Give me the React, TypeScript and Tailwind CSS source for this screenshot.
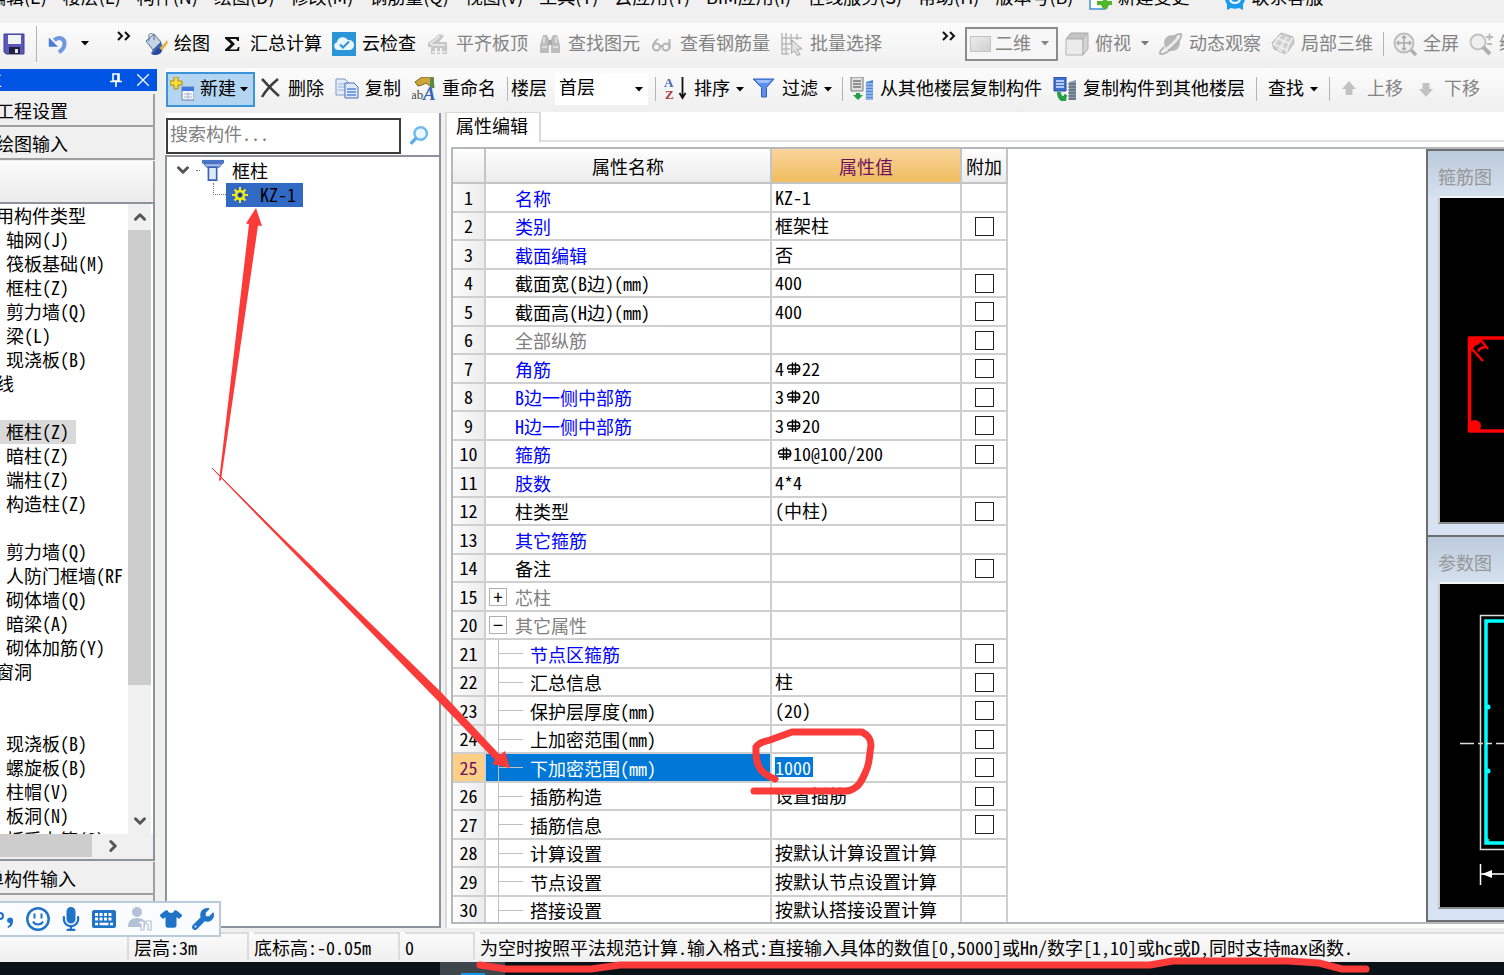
import React from "react";
import { FaMicrophone, FaShirt, FaWrench } from "react-icons/fa6";
import { ChevronDown, ChevronRight, ChevronUp } from "lucide-react";

const UI = "font-['Noto_Sans_CJK_SC',sans-serif]";
const MONO = "font-['Noto_Sans_Mono_CJK_SC','Noto_Sans_CJK_SC',monospace]";

/* ---------- icons ---------- */

function Icon({ children, className = "h-6 w-6" }: { children: React.ReactNode; className?: string }) {
  return (
    <svg viewBox="0 0 24 24" className={`shrink-0 ${className}`} fill="none" aria-hidden="true">
      {children}
    </svg>
  );
}

const Caret = ({ className = "" }: { className?: string }) => (
  <svg viewBox="0 0 8 5" className={`h-[5px] w-2 shrink-0 ${className}`} aria-hidden="true">
    <path d="M0 0h8L4 4.6z" fill="currentColor" />
  </svg>
);

const More = () => (
  <svg viewBox="0 0 14 10" className="h-[10px] w-[14px] shrink-0" fill="none" stroke="#111" strokeWidth="2" aria-hidden="true">
    <path d="M1 1l4 4-4 4M8 1l4 4-4 4" />
  </svg>
);

const SaveIcon = () => (
  <Icon>
    <path d="M2 2h20v20H4l-2-2z" fill="#5a58bc" stroke="#3f3c96" />
    <path d="M6 3h13v9H6z" fill="#f1f3fb" />
    <path d="M7 15h11v7H7z" fill="#20223c" />
    <path d="M13 17h3v4h-3z" fill="#e8e8f2" />
  </Icon>
);
const UndoIcon = () => (
  <Icon className="h-[22px] w-[22px]">
    <path d="M8 8c5-5 12-2 11 5-.4 4-3 6-6 8" stroke="#6f96de" strokeWidth="4.500" />
    <path d="M2 5v10h10z" fill="#4b7bd4" />
  </Icon>
);
const PaintIcon = () => (
  <Icon>
    <path d="M2 9l8-7 7 8-8 8z" fill="#c4d3e6" stroke="#5a6f8e" />
    <path d="M5 9V3c0-2 5-2 5 1v4" stroke="#5a6f8e" />
    <path d="M9 18l8-8 2 5-5 7c-3 2-6 1-7-1z" fill="#3f66b5" />
    <path d="M23 8l-8 9 3 2 6-8z" fill="#e9b44c" />
    <path d="M15 16c-4 1-4 5-7 6 5 2 10 0 10-4z" fill="#274a9c" />
  </Icon>
);
const SigmaIcon = () => (
  <Icon>
    <path d="M5 5h14v4h-1.600c-.4-1.500-1-2-3-2H10l5 5-5.500 5.500H15c2 0 2.600-.6 3-2.500H19.500L19 19H5v-1.500l6-5.500-6-5.500z" fill="#111" />
  </Icon>
);
const CloudIcon = () => (
  <Icon>
    <path d="M0 0h24v24H0z" fill="#2b95d8" />
    <path d="M6 18a4 4 0 0 1-1-7.800A6 6 0 0 1 16 8a5 5 0 0 1 2 10z" fill="#eaf6fd" />
    <path d="M8 12.500l3 3 6-6" stroke="#2b95d8" strokeWidth="2" />
  </Icon>
);
const SlabIcon = () => (
  <Icon>
    <path d="M2 11L14 2l4 2-5 6h8v12h-5v-6h-2v6h-3v-6H9v6H5v-7H2z" fill="#c6c6c6" />
    <path d="M4 12l10-8M5 13h14M6 20h14" stroke="#efefef" strokeWidth="1.500" />
  </Icon>
);
const BinocularIcon = () => (
  <Icon>
    <path d="M5 3h4l2 4v14H2v-8zM19 3h-4l-2 4v14h9v-8z" fill="#bdbdbd" />
    <path d="M10 8h4v5h-4z" fill="#a8a8a8" />
    <path d="M4 15h5M15 15h5M6 5v6M18 5v6" stroke="#e6e6e6" strokeWidth="1.500" />
  </Icon>
);
const GlassesIcon = () => (
  <Icon>
    <g stroke="#b4b4b4" strokeWidth="2">
      <circle cx="6.500" cy="15" r="3.500" />
      <circle cx="16" cy="15" r="3.500" />
      <path d="M3 15c0-4 2-6 5-8M10 14h2.500M19.500 17V7" />
    </g>
  </Icon>
);
const BatchIcon = () => (
  <Icon>
    <path d="M2 1v21h7M6 1v21M2 6h20M2 12h10M2 17h8M11 2v9M17 2v6" stroke="#b9b9b9" strokeWidth="1.500" />
    <path d="M12 8l10 9-5 .5 3 5-3 1-2.500-5-3 3z" fill="#e2e2e2" stroke="#a9a9a9" />
  </Icon>
);
const CubeIcon = () => (
  <Icon>
    <path d="M1 7l5-6h17l-5 6z" fill="#c4c4c4" stroke="#a8a8a8" />
    <path d="M1 7h17v16H1z" fill="#ebebeb" stroke="#b5b5b5" />
    <path d="M18 7l5-6v16l-5 6z" fill="#d4d4d4" stroke="#b0b0b0" />
  </Icon>
);
const PlanetIcon = () => (
  <Icon>
    <circle cx="13" cy="11" r="8" fill="#b8b8b8" />
    <path d="M5 18C10 16 18 9 21 3" stroke="#ececec" strokeWidth="3" />
    <path d="M1 22c4 1 11-4 15-9 5-5 7-9 6-11-2-1-5 1-8 3M1 22c-1-2 2-5 4-7" stroke="#b2b2b2" strokeWidth="1.800" />
  </Icon>
);
const LocalIcon = () => (
  <Icon>
    <path d="M1 11L10 1l12 4 1 6-8 11-12-5z" fill="#cfcfcf" stroke="#b2b2b2" />
    <path d="M5 6l13 5 4-5M18 11l-3 11M10 3L2 13M16 5l-9 14M2 12l14 6M12 9l-2 11" stroke="#efefef" strokeWidth="1.500" />
  </Icon>
);
const FullIcon = () => (
  <Icon>
    <circle cx="11" cy="11" r="9.500" fill="#efefef" stroke="#bdbdbd" strokeWidth="2" />
    <path d="M11 4v14M4 11h14M9 6l2-2 2 2M9 16l2 2 2-2M6 9l-2 2 2 2M16 9l2 2-2 2" stroke="#a9a9a9" strokeWidth="1.500" />
    <path d="M18 18l5 5" stroke="#b0b0b0" strokeWidth="3.500" />
  </Icon>
);
const ZoomIcon = () => (
  <Icon>
    <circle cx="9" cy="10" r="7.500" fill="#efefef" stroke="#c2c2c2" strokeWidth="2" />
    <path d="M14 15l7 7" stroke="#b0b0b0" strokeWidth="4" />
    <path d="M17 5h7M20.500 1.500v7M18 12h5" stroke="#b8b8b8" strokeWidth="1.800" />
  </Icon>
);
const NewIcon = () => (
  <Icon>
    <path d="M12 10h12v13H12z" fill="#f4f7fd" stroke="#6d7fae" />
    <path d="M12 10h12v4H12z" fill="#3f78dc" />
    <path d="M14 17h8M14 20h8M18 15v7" stroke="#a9b4cc" />
    <path d="M4 0h4v4h4v4H8v4H4V8H0V4h4z" fill="#f7dc3c" stroke="#a88a14" />
  </Icon>
);
const DeleteIcon = () => (
  <Icon>
    <path d="M4 2c5 5 10 11 17 17M20 2C14 7 8 13 4 20" stroke="#3c3c3c" strokeWidth="2.500" />
  </Icon>
);
const CopyIcon = () => (
  <Icon>
    <path d="M1 2h9l4 4v12H1z" fill="#e4edfa" stroke="#7f97c4" />
    <path d="M3 7h7M3 10h7M3 13h7" stroke="#8fb0e4" />
    <path d="M10 6h9l4 4v11H10z" fill="#dfe9fa" stroke="#4c6cae" />
    <path d="M12 12h9M12 15h9M12 18h9" stroke="#5685d8" strokeWidth="1.500" />
  </Icon>
);
const RenameIcon = () => (
  <Icon>
    <path d="M3 5l7-5h11l1 11-4-2-4-3-4 2-4 1z" fill="#cda53a" stroke="#7d6620" />
    <path d="M18 1h4v9h-4z" fill="#558c4a" />
    <text x="-1" y="22" fontSize="13" fontFamily="Liberation Serif, serif" fill="#444">ab</text>
    <text x="11" y="23" fontSize="19" fontWeight="700" fontStyle="italic" fontFamily="Liberation Serif, serif" fill="#3465b8">A</text>
  </Icon>
);
const SortIcon = () => (
  <Icon>
    <text x="0" y="10" fontSize="13" fontWeight="700" fontFamily="Liberation Serif, serif" fill="#4467ae">A</text>
    <text x="1" y="22" fontSize="13" fontWeight="700" fontFamily="Liberation Serif, serif" fill="#a93c3c">Z</text>
    <path d="M18.500 0v20M15.500 16l3 5 3-5" stroke="#111" strokeWidth="1.800" />
  </Icon>
);
const FilterIcon = () => (
  <Icon>
    <path d="M1 2h21l-7.500 8.500V20h-5v-9.500z" fill="#5a8ff0" stroke="#3560b8" />
    <path d="M4 3h15l-3 3H7z" fill="#9dc0fa" />
  </Icon>
);
function FloorCopyIcon({ blue = false }: { blue?: boolean }) {
  return (
    <Icon>
      <path d="M1 0h12v14H1z" fill={blue ? "#3f6fd0" : "#e0e0e0"} stroke={blue ? "#274a9c" : "#777"} />
      <path d="M3 4h8M3 7h8M3 10h8" stroke={blue ? "#dfe9fa" : "#777"} strokeWidth="1.500" />
      {blue ? (
        <path d="M4 15h4c0 3 1 4 3 4v-2l3 1-1 6H8c-3-2-4-5-4-9z" fill="#21a045" />
      ) : (
        <path d="M6 16h4v2h3l-5 5-5-5h3z" fill="#21a045" />
      )}
      <path d="M16 5l7-2v20h-7z" fill={blue ? "#8d9bac" : "#4f86d8"} />
      <path d="M15 7h8M15 10h8M15 13h8M15 16h8M15 19h8M15 22h8" stroke={blue ? "#4b5a6c" : "#cfe0f8"} strokeWidth="1.200" />
    </Icon>
  );
}
function MoveIcon({ down = false }: { down?: boolean }) {
  return (
    <Icon className={down ? "h-6 w-6 rotate-180" : "h-6 w-6"}>
      <path d="M12 4l7 8h-3.500v6h-7v-6H5z" fill="#c2c2c2" />
    </Icon>
  );
}
const PillarIcon = () => (
  <Icon className="h-6 w-[22px]">
    <path d="M0 1h24v4H0z" fill="#4a74c4" />
    <path d="M2 5h20l-3 4H5z" fill="#9db9ec" stroke="#3b62b0" />
    <path d="M7 9h9v14H7z" fill="#dfe9fb" stroke="#3b62b0" strokeWidth="1.800" />
  </Icon>
);
const GearIcon = () => (
  <svg viewBox="0 0 16 16" className="h-4 w-4 shrink-0" fill="none" stroke="#f5ea14" aria-hidden="true">
    <circle cx="8" cy="8" r="4" strokeWidth="2.500" />
    <path d="M8 0v4M8 12v4M0 8h4M12 8h4M2.500 2.500l2.500 2.500M11 11l2.500 2.500M13.500 2.500L11 5M5 11l-2.500 2.500" strokeWidth="2" />
    <circle cx="8" cy="8" r="1.500" fill="#222" stroke="none" />
  </svg>
);
const Rebar = () => (
  <svg viewBox="0 0 18 18" className="mt-[2px] h-[18px] w-[18px] shrink-0" fill="none" stroke="#000" strokeWidth="1.400" aria-hidden="true">
    <path d="M8.500 2.500v12.500M11.500 2.500v12.500M6.500 5h7c3 1 3 6 0 7H4M6.500 5c-3 .5-3.500 3-2.500 4H15" />
  </svg>
);

/* ---------- top bars ---------- */

function MenuBar() {
  const left = ["编辑(E)", "楼层(L)", "构件(N)", "绘图(D)", "修改(M)", "钢筋量(Q)", "视图(V)", "工具(T)", "云应用(Y)", "BIM应用(I)", "在线服务(S)", "帮助(H)", "版本号(B)"];
  return (
    <nav className="flex h-[23px] shrink-0 overflow-hidden bg-[#f0f0f0]">
      <div className="-mt-4 -ml-3 flex h-6 items-center gap-4 text-[18px] leading-6 whitespace-nowrap">
        {left.map((t) => (
          <button key={t}>{t}</button>
        ))}
        <button className="flex items-center gap-1">
          <Icon className="mt-2 h-6 w-6">
            <path d="M1 0h15v21H1z" fill="#fff" stroke="#3d8fd8" strokeWidth="1.500" />
            <path d="M14 9h4v4h5v4h-3l-2 4h-4l-2-4H8v-4h6z" fill="#4fb82a" />
          </Icon>
          新建变更
        </button>
        <span className="-mx-2">·</span>
        <button className="flex items-center gap-1">
          <Icon className="mt-2 h-6 w-6">
            <path d="M2 10a10 10 0 0 1 20 0c0 3-1 5-2 6v6l-4-2c-3 1-5 1-8 0l-4 2v-6c-1-1-2-3-2-6z" fill="#1c9af0" />
            <path d="M7 12c2 4 8 4 10 0" stroke="#fff" strokeWidth="2" />
          </Icon>
          联系客服
        </button>
      </div>
    </nav>
  );
}

const Sep = ({ className = "" }: { className?: string }) => (
  <span className={`w-px shrink-0 bg-[#b4b4b4] ${className}`} />
);

function Tool({ icon, label, gray = false, caret = false }: { icon: React.ReactNode; label: string; gray?: boolean; caret?: boolean }) {
  return (
    <button className={`flex shrink-0 items-center gap-1.5 ${gray ? "text-[#838383]" : "text-black"}`}>
      {icon}
      <span className="pb-1">{label}</span>
      {caret && <Caret />}
    </button>
  );
}

function MainToolbar() {
  return (
    <div className="flex h-[45px] shrink-0 items-center overflow-hidden bg-linear-to-b from-[#fcfcfc] to-[#efefef] pb-1 text-[18px] leading-6 whitespace-nowrap">
      <div className="flex w-[134px] shrink-0 items-center pl-[2px]">
        <button aria-label="保存"><SaveIcon /></button>
        <Sep className="ml-[10px] h-9" />
        <button aria-label="撤销" className="ml-[10px] flex items-center gap-3">
          <UndoIcon />
          <Caret />
        </button>
        <span className="ml-[28px] -mt-4"><More /></span>
      </div>
      <div className="flex shrink-0 items-center gap-[10px] pl-[10px]">
        <Tool icon={<PaintIcon />} label="绘图" />
        <Tool icon={<SigmaIcon />} label="汇总计算" />
        <Tool icon={<CloudIcon />} label="云检查" />
        <Tool icon={<SlabIcon />} label="平齐板顶" gray />
        <Tool icon={<BinocularIcon />} label="查找图元" gray />
        <Tool icon={<GlassesIcon />} label="查看钢筋量" gray />
        <Tool icon={<BatchIcon />} label="批量选择" gray />
      </div>
      <span className="ml-[60px] -mt-4 shrink-0"><More /></span>
      <div className="ml-[9px] flex h-[34px] w-[93px] shrink-0 items-center border-2 border-[#8c8c8c] bg-[#f6f6f6] pl-[3px] text-[#838383]">
        <span className="h-4 w-[21px] border border-[#c4c4c4] bg-linear-to-br from-[#ececec] to-[#cfcfcf]" />
        <select aria-label="视图模式" className="ml-1 w-[42px] appearance-none bg-transparent pb-1">
          <option>二维</option>
        </select>
        <Caret className="ml-1" />
      </div>
      <div className="flex shrink-0 items-center gap-[10px] pl-[7px]">
        <Tool icon={<CubeIcon />} label="俯视" gray />
        <Caret className="text-[#777]" />
        <Tool icon={<PlanetIcon />} label="动态观察" gray />
        <Tool icon={<LocalIcon />} label="局部三维" gray />
        <Sep className="h-6" />
      </div>
      <div className="flex shrink-0 items-center gap-[10px] pl-[9px]">
        <Tool icon={<FullIcon />} label="全屏" gray />
        <Tool icon={<ZoomIcon />} label="缩放" gray />
      </div>
    </div>
  );
}

function ComponentToolbar() {
  return (
    <div className="flex h-[42px] shrink-0 items-center overflow-hidden bg-linear-to-b from-[#fcfcfc] to-[#efefef] text-[18px] leading-6 whitespace-nowrap">
      <button className="ml-[1px] flex h-[35px] w-[89px] shrink-0 items-center border-2 border-[#3a94dc] bg-[#b3d5f2] pl-[2px]">
        <NewIcon />
        <span className="ml-[6px] pb-1">新建</span>
        <Caret className="ml-1" />
      </button>
      <div className="flex items-center gap-[11px] pl-[3px]">
        <Tool icon={<DeleteIcon />} label="删除" />
        <Tool icon={<CopyIcon />} label="复制" />
        <Tool icon={<RenameIcon />} label="重命名" />
        <Sep className="h-6" />
      </div>
      <label className="ml-[3px] shrink-0 pb-1" htmlFor="floor">楼层</label>
      <div className="ml-2 flex h-8 w-[93px] shrink-0 items-center bg-white pl-[4px]">
        <select id="floor" className="w-[76px] appearance-none bg-transparent pb-1.5">
          <option>首层</option>
        </select>
        <Caret />
      </div>
      <div className="flex shrink-0 items-center gap-2 pl-[7px]">
        <Sep className="h-6" />
        <Tool icon={<SortIcon />} label="排序" caret />
      </div>
      <div className="flex shrink-0 items-center gap-[10px] pl-2">
        <Tool icon={<FilterIcon />} label="过滤" caret />
        <Sep className="h-6" />
      </div>
      <div className="flex shrink-0 items-center gap-[11px] pl-[7px]">
        <Tool icon={<FloorCopyIcon />} label="从其他楼层复制构件" />
        <Tool icon={<FloorCopyIcon blue />} label="复制构件到其他楼层" />
        <Sep className="h-6" />
        <button className="flex items-center gap-1.5">
          <span className="pb-1">查找</span>
          <Caret />
        </button>
        <Sep className="h-6" />
      </div>
      <div className="flex shrink-0 items-center gap-[11px] pl-[7px]">
        <Tool icon={<MoveIcon />} label="上移" gray />
        <Tool icon={<MoveIcon down />} label="下移" gray />
      </div>
    </div>
  );
}

/* ---------- left navigation ---------- */

type NavRow = { text: string; group?: boolean; selected?: boolean };
const navRows: NavRow[] = [
  { text: "常用构件类型", group: true },
  { text: "轴网(J)" },
  { text: "筏板基础(M)" },
  { text: "框柱(Z)" },
  { text: "剪力墙(Q)" },
  { text: "梁(L)" },
  { text: "现浇板(B)" },
  { text: "轴线", group: true },
  { text: "" },
  { text: "框柱(Z)", selected: true },
  { text: "暗柱(Z)" },
  { text: "端柱(Z)" },
  { text: "构造柱(Z)" },
  { text: "" },
  { text: "剪力墙(Q)" },
  { text: "人防门框墙(RF" },
  { text: "砌体墙(Q)" },
  { text: "暗梁(A)" },
  { text: "砌体加筋(Y)" },
  { text: "门窗洞", group: true },
  { text: "" },
  { text: "" },
  { text: "现浇板(B)" },
  { text: "螺旋板(B)" },
  { text: "柱帽(V)" },
  { text: "板洞(N)" },
  { text: "板受力筋(S)" },
];

function NavButton({ children }: { children: React.ReactNode }) {
  return (
    <button className="flex h-[33px] w-full shrink-0 items-center overflow-hidden border-r-2 border-b-2 border-[#a0a0a0] bg-[#f0f0f0] text-left leading-6 whitespace-nowrap">
      {children}
    </button>
  );
}

function Navigation() {
  return (
    <aside className={`flex w-[157px] shrink-0 flex-col overflow-hidden bg-[#f0f0f0] text-[18px] ${MONO}`}>
      <div className="mt-[1px] flex h-[22px] shrink-0 items-center bg-[#0054e3] text-white">
        <span className="-ml-4 pb-1 leading-[22px]">栏</span>
        <button aria-label="固定" className="ml-auto">
          <svg viewBox="0 0 12 14" className="h-[14px] w-3" fill="none" stroke="#fff" strokeWidth="1.600">
            <path d="M3 1h6v7H3zM0 8.500h12M6 8.500V14M8 1v7" />
          </svg>
        </button>
        <button aria-label="关闭" className="mr-2 ml-[15px]">
          <svg viewBox="0 0 12 12" className="h-3 w-3" fill="none" stroke="#fff" strokeWidth="1.300">
            <path d="M0 0l12 12M12 0L0 12" />
          </svg>
        </button>
      </div>
      <div className="flex min-h-0 flex-1 flex-col pt-[3px] pr-[2px]">
        <NavButton><span className="-ml-1">工程设置</span></NavButton>
        <NavButton><span className="-ml-1">绘图输入</span></NavButton>
        <div className="mt-[1px] h-[41px] shrink-0 border-r-2 border-[#a0a0a0] bg-linear-to-b from-[#fbfbfb] to-[#ececec]" />
        <div className="flex min-h-0 flex-1 flex-col border-2 border-l-0 border-[#8c939b] bg-white">
          <div className="flex min-h-0 flex-1">
            <ul className="min-w-0 flex-1 overflow-hidden">
              {navRows.map((r, i) => (
                <li key={i} className="h-6 leading-[22px] whitespace-nowrap">
                  {r.group ? (
                    <span className="-ml-[22px]">{r.text}</span>
                  ) : (
                    <span className={`inline-block h-6 pr-[7px] pl-1.5 ${r.selected ? "bg-[#d9d9d9]" : ""}`}>{r.text}</span>
                  )}
                </li>
              ))}
            </ul>
            <div className="mr-[2px] flex w-[23px] shrink-0 flex-col items-center bg-[#f0f0f0]">
              <ChevronUp className="my-1 h-[18px] w-[18px] shrink-0 text-[#555]" strokeWidth={4} />
              <div className="h-[455px] w-full bg-[#cdcdcd]" />
              <ChevronDown className="mt-auto mb-1 h-[18px] w-[18px] shrink-0 text-[#555]" strokeWidth={4} />
            </div>
          </div>
          <div className="flex h-[25px] shrink-0 items-center bg-[#f0f0f0] pb-[2px]">
            <div className="h-full w-[92px] bg-[#cdcdcd]" />
            <ChevronRight className="ml-3 h-[18px] w-[18px] text-[#555]" strokeWidth={4} />
          </div>
        </div>
        <div className="mt-[1px] flex shrink-0 flex-col">
          <NavButton><span className="-ml-[14px]">单构件输入</span></NavButton>
          <NavButton><span /></NavButton>
        </div>
      </div>
    </aside>
  );
}

/* ---------- component tree ---------- */

function ComponentTree() {
  return (
    <section className={`mt-[3px] flex w-[276px] shrink-0 flex-col border-r-2 border-b-2 border-[#8c939b] bg-white text-[18px] ${MONO}`}>
      <div className="flex h-[44px] shrink-0 items-center border-b-2 border-[#8c939b] pt-[3px]">
        <input
          aria-label="搜索构件"
          placeholder="搜索构件..."
          className="ml-[1px] h-9 w-[235px] border-2 border-[#3c3c3c] bg-white px-[2px] pb-1.5 placeholder:text-[#808080]"
        />
        <button aria-label="搜索" className="ml-[8px]">
          <Icon className="h-5 w-5">
            <circle cx="14" cy="9" r="7.500" fill="#eef8ff" stroke="#6dbcec" strokeWidth="3" />
            <path d="M8.500 14.500L2 21.500" stroke="#58aee6" strokeWidth="4" />
          </Icon>
        </button>
      </div>
      <ul className="min-h-0 flex-1 border-l-2 border-[#8c939b] leading-6">
        <li className="flex h-[26px] items-center">
          <ChevronDown className="ml-[7px] h-[18px] w-[18px] text-[#555]" strokeWidth={4} />
          <span className="mr-[2px] ml-1 w-1 border-t border-dotted border-[#777]" />
          <PillarIcon />
          <span className="ml-[8px]">框柱</span>
        </li>
        <li className="flex h-6">
          <span className="ml-[46px] h-3 w-[13px] border-b border-l border-dotted border-[#777]" />
          <button className="flex h-6 w-[77px] items-center gap-3 bg-[#316ac5] pl-[6px]">
            <GearIcon />
            <span className="pb-[3px]">KZ-1</span>
          </button>
        </li>
      </ul>
    </section>
  );
}

/* ---------- property table ---------- */

type Prop = {
  n: number;
  name: string;
  value?: React.ReactNode;
  tone?: "blue" | "gray";
  check?: boolean;
  node?: "+" | "−";
  child?: boolean;
  active?: boolean;
};

const props: Prop[] = [
  { n: 1, name: "名称", value: "KZ-1", tone: "blue" },
  { n: 2, name: "类别", value: "框架柱", tone: "blue", check: true },
  { n: 3, name: "截面编辑", value: "否", tone: "blue" },
  { n: 4, name: "截面宽(B边)(mm)", value: "400", check: true },
  { n: 5, name: "截面高(H边)(mm)", value: "400", check: true },
  { n: 6, name: "全部纵筋", tone: "gray", check: true },
  { n: 7, name: "角筋", value: <>4<Rebar />22</>, tone: "blue", check: true },
  { n: 8, name: "B边一侧中部筋", value: <>3<Rebar />20</>, tone: "blue", check: true },
  { n: 9, name: "H边一侧中部筋", value: <>3<Rebar />20</>, tone: "blue", check: true },
  { n: 10, name: "箍筋", value: <><Rebar />10@100/200</>, tone: "blue", check: true },
  { n: 11, name: "肢数", value: "4*4", tone: "blue" },
  { n: 12, name: "柱类型", value: "(中柱)", check: true },
  { n: 13, name: "其它箍筋", tone: "blue" },
  { n: 14, name: "备注", check: true },
  { n: 15, name: "芯柱", tone: "gray", node: "+" },
  { n: 20, name: "其它属性", tone: "gray", node: "−" },
  { n: 21, name: "节点区箍筋", tone: "blue", check: true, child: true },
  { n: 22, name: "汇总信息", value: "柱", check: true, child: true },
  { n: 23, name: "保护层厚度(mm)", value: "(20)", check: true, child: true },
  { n: 24, name: "上加密范围(mm)", check: true, child: true },
  { n: 25, name: "下加密范围(mm)", check: true, child: true, active: true },
  { n: 26, name: "插筋构造", value: "设置插筋", check: true, child: true },
  { n: 27, name: "插筋信息", check: true, child: true },
  { n: 28, name: "计算设置", value: "按默认计算设置计算", child: true },
  { n: 29, name: "节点设置", value: "按默认节点设置计算", child: true },
  { n: 30, name: "搭接设置", value: "按默认搭接设置计算", child: true },
];

const cell = "border-r-2 border-b-2 border-[#cfcfcf] p-0 font-normal";

function PropertyRow({ p }: { p: Prop }) {
  const tone = p.active ? "text-white" : p.tone === "blue" ? "text-[#0000ff]" : p.tone === "gray" ? "text-[#808080]" : "text-black";
  return (
    <tr className="h-[28px] odd:h-[29px]">
      <th scope="row" className={`${cell} text-center ${p.active ? "bg-[#fbcf86] text-[#701060]" : "bg-linear-to-r from-[#fcfcfc] to-[#ececec]"}`}>
        <div className="flex h-[26px] items-center justify-center pb-[2px]">{p.n}</div>
      </th>
      <td className={`${cell} ${p.active ? "bg-[#0078d7]" : ""}`}>
        <div className={`flex h-[26px] items-center ${tone}`}>
          {p.child && (
            <>
              <span className="-my-px h-[28px] w-[13px] shrink-0 border-r border-[#c0c0c0]" />
              <span className="h-px w-6 shrink-0 bg-[#c0c0c0]" />
              <span className="ml-[7px]">{p.name}</span>
            </>
          )}
          {p.node && (
            <button className="ml-[3px] flex h-[18px] w-[18px] shrink-0 items-center justify-center border border-[#b0b0b0] pb-[2px] leading-none text-black">
              {p.node}
            </button>
          )}
          {!p.child && <span className={p.node ? "ml-2" : "ml-[29px]"}>{p.name}</span>}
        </div>
      </td>
      <td className={cell}>
        <div className="flex h-[26px] items-center pb-[2px] pl-[3px]">
          {p.active ? (
            <input aria-label={p.name} defaultValue="1000" className="h-5 w-[38px] bg-[#0078d7] text-white outline-none" />
          ) : (
            p.value
          )}
        </div>
      </td>
      <td className={cell}>
        {p.check && (
          <div className="flex justify-center">
            <input type="checkbox" aria-label={`附加 ${p.name}`} className="h-[19px] w-[19px] appearance-none border border-[#222] bg-white" />
          </div>
        )}
      </td>
    </tr>
  );
}

function PropertyTable() {
  const head = "border-r-2 border-b-2 border-[#c4c4c4] p-0 text-center font-normal";
  const plain = "bg-linear-to-b from-[#fefefe] to-[#ececec]";
  return (
    <table className="w-[555px] table-fixed border-separate border-spacing-0 leading-6">
      <colgroup>
        <col className="w-[33px]" />
        <col className="w-[286px]" />
        <col className="w-[190px]" />
        <col className="w-[46px]" />
      </colgroup>
      <thead>
        <tr className="h-[35px]">
          <th className={`${head} ${plain}`} />
          <th className={`${head} ${plain}`}>属性名称</th>
          <th className={`${head} bg-linear-to-b from-[#f9d59c] to-[#f0bd5c] text-[#701060]`}>属性值</th>
          <th className={`${head} ${plain}`}>附加</th>
        </tr>
      </thead>
      <tbody>
        {props.map((p) => (
          <PropertyRow key={p.n} p={p} />
        ))}
      </tbody>
    </table>
  );
}

/* ---------- preview windows ---------- */

function PreviewWindow({ title, children }: { title: string; children: React.ReactNode }) {
  return (
    <section className="flex min-h-0 flex-1 flex-col border-t-2 border-l-2 border-[#6e6e6e] bg-[#d7e3f2]">
      <h2 className={`h-[45px] shrink-0 overflow-hidden bg-linear-to-b from-[#bccbdb] to-[#d4e0ee] pt-[13px] pl-[10px] leading-6 whitespace-nowrap text-[#979797] ${UI}`}>
        {title}
      </h2>
      <div className="mb-[11px] ml-[10px] min-h-0 flex-1 overflow-hidden border-2 border-r-0 border-t-[#f4f4f4] border-b-[#8a8a8a] border-l-[#c8c8c8] bg-black">
        <svg className="h-full w-full" fill="none">{children}</svg>
      </div>
    </section>
  );
}

function Previews() {
  return (
    <div className="flex w-[78px] shrink-0 flex-col overflow-hidden border-b-2 border-[#6e6e6e]">
      <PreviewWindow title="箍筋图">
        <path d="M100 140H29.500v93H100" stroke="#f00" strokeWidth="3.500" strokeLinejoin="round" />
        <path d="M30 140h13l-4 6-4 2-5 6z" fill="#f00" />
        <path d="M40 141l8 10M32 151l11 12M38 153l3-3 4-1" stroke="#f00" strokeWidth="2.500" />
        <circle cx="35" cy="228" r="6" fill="#f00" />
      </PreviewWindow>
      <PreviewWindow title="参数图">
        <path d="M100 31.500H40.500v234H100" stroke="#ddd" strokeWidth="1.500" />
        <path d="M100 37H46v222H100" stroke="#0ff" strokeWidth="3.500" />
        <path d="M45 36h6l-6 6zM45 259v-6l5 3z" fill="#0ff" />
        <circle cx="48" cy="123" r="2.500" fill="#0ff" />
        <circle cx="48" cy="187" r="2.500" fill="#0ff" />
        <path d="M20 159.500h14M38 159.500h5M46 159.500h6M56 159.500h14" stroke="#ddd" strokeWidth="1.500" />
        <path d="M40.500 280v21M41 290h40" stroke="#fff" strokeWidth="1.500" />
        <path d="M42 290l10-4v8z" fill="#fff" />
      </PreviewWindow>
    </div>
  );
}

function PropertyPanel() {
  return (
    <section className={`mt-[2px] ml-1 flex min-w-0 flex-1 flex-col border-l-2 border-[#d9d9d9] bg-white text-[18px] ${MONO}`}>
      <div className="flex h-[30px] shrink-0">
        <button className="w-[94px] shrink-0 border-t border-r-2 border-[#d9d9d9] bg-white pr-[2px] pb-1.5 text-center leading-6">属性编辑</button>
        <div className="flex-1 border-b-2 border-[#e0e0e0]" />
      </div>
      <div className="mt-[5px] mb-[4px] ml-[4px] flex min-h-0 flex-1 border-2 border-r-0 border-[#b4b8bd] bg-white">
        <div className="min-w-0 flex-1 overflow-hidden">
          <PropertyTable />
        </div>
        <Previews />
      </div>
    </section>
  );
}

/* ---------- bottom ---------- */

function StatusBar() {
  const field = "h-7 shrink-0 border-t-2 border-r-2 border-[#dcdcdc]";
  return (
    <footer className={`mt-1 flex h-[30px] shrink-0 items-start gap-[5px] overflow-hidden bg-linear-to-b from-[#fbfbfb] to-[#efefef] text-[18px] leading-[26px] whitespace-nowrap ${MONO}`}>
      <span className={`${field} w-[129px]`} />
      <span className={`${field} w-[115px]`}>层高:3m</span>
      <span className={`${field} w-[146px]`}>底标高:-0.05m</span>
      <span className={`${field} w-[70px]`}>0</span>
      <span className="h-7 flex-1 border-t-2 border-[#dcdcdc]">
        为空时按照平法规范计算.输入格式:直接输入具体的数值[0,5000]或Hn/数字[1,10]或hc或D,同时支持max函数.
      </span>
    </footer>
  );
}

function ImeBar() {
  return (
    <div className="absolute bottom-[38px] left-0 flex h-9 w-[221px] items-center border-2 border-l-0 border-[#b9cbdb] bg-[#fafcff] text-[#1f74c8]">
      <svg viewBox="0 0 14 24" className="h-6 w-[14px]" aria-hidden="true">
        <circle cx="0" cy="9" r="3" fill="none" stroke="currentColor" strokeWidth="2" />
        <path d="M7 13a3 3 0 1 1 6 1c0 4-2 6-5 7l-.5-1.500c2-1 2.500-2 2.500-3.500-2 0-3-1-3-3z" fill="currentColor" />
      </svg>
      <button aria-label="表情" className="ml-3">
        <Icon>
          <circle cx="12" cy="12" r="10.700" stroke="currentColor" strokeWidth="2.500" />
          <path d="M8.500 6.500v5M15.500 6.500v5M7 14.500c2 4 8 4 10 0" stroke="currentColor" strokeWidth="2" />
        </Icon>
      </button>
      <button aria-label="语音" className="ml-[9px]"><FaMicrophone className="h-6 w-6" /></button>
      <button aria-label="键盘" className="ml-[9px]">
        <Icon>
          <rect x="0" y="3" width="24" height="18" rx="2" fill="currentColor" />
          <path d="M3 7.500h18M3 12h18" stroke="#fff" strokeWidth="3" strokeDasharray="3 1.500" />
          <path d="M3 17h3M7.500 17h9M18 17h3" stroke="#fff" strokeWidth="2.500" />
        </Icon>
      </button>
      <button aria-label="用户" className="ml-3 text-[#b3c1d6]">
        <Icon>
          <circle cx="9" cy="5" r="5" fill="currentColor" />
          <path d="M0 20c0-6 3-9 9-9s8 3 8 5v4z" fill="currentColor" />
          <path d="M11 14h5v9h-3v-6h-2zM18 14h5v9h-3v-6h-2z" fill="#fff" stroke="currentColor" strokeWidth="1.200" />
        </Icon>
      </button>
      <button aria-label="皮肤" className="ml-2">
        <FaShirt className="h-[22px] w-[22px]" />
      </button>
      <button aria-label="工具" className="ml-[10px]">
        <FaWrench className="h-[22px] w-[22px]" />
      </button>
    </div>
  );
}

function Marks() {
  return (
    <svg className="pointer-events-none absolute inset-0 h-full w-full" fill="none" aria-hidden="true">
      <g fill="#fb3a3a">
        <path d="M219 481L249 224l-3-.500L256 208l6 18-4-.500L221 480z" />
        <path d="M211 468L441 692l59 63 5-4 5 17-18-4 3-4-56-58z" />
      </g>
      <path d="M212 468l60 60" stroke="#fb3a3a" />
      <g stroke="#fb3a3a" strokeWidth="7" strokeLinecap="round" strokeLinejoin="round">
        <path d="M775 779c-8-3-13-6-16-12-4-8-3-14-3-20 3-5 8-5 14-7l22-8h70c8 4 9 9 9 14-2 9-1 17-5 25-3 7-6 14-10 16-5 4-8 4-12 4h-90" />
        <path d="M480 965l26 4h85l29-4h530l23-4h115l31 2 23 6h24" />
      </g>
    </svg>
  );
}

export default function App() {
  return (
    <div className={`relative flex h-screen flex-col overflow-hidden bg-[#f0f0f0] text-black ${UI}`}>
      <MenuBar />
      <MainToolbar />
      <div className="flex min-h-0 flex-1">
        <Navigation />
        <main className="flex min-w-0 flex-1 flex-col pl-2">
          <ComponentToolbar />
          <div className="flex min-h-0 flex-1">
            <ComponentTree />
            <PropertyPanel />
          </div>
        </main>
      </div>
      <StatusBar />
      <div className="flex h-[13px] shrink-0 bg-[#091217]">
        <div className="ml-[440px] flex w-[65px] items-end justify-center bg-[#3c464b]">
          <span className="h-[2px] w-6 bg-[#1296e8]" />
        </div>
      </div>
      <ImeBar />
      <Marks />
    </div>
  );
}
